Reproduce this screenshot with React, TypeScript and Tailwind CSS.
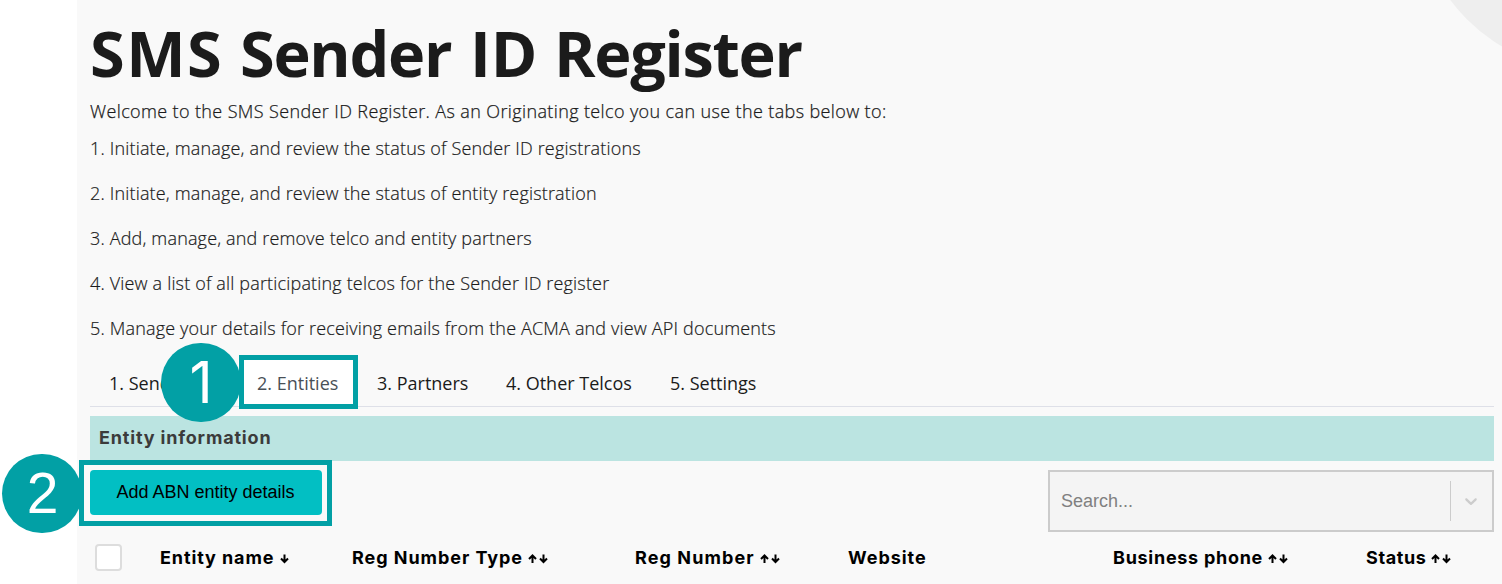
import React from "react";
import clsx from "clsx";

interface Column {
  label: string;
  sort?: "down" | "both";
  className: string;
}

const STEPS = [
  "1. Initiate, manage, and review the status of Sender ID registrations",
  "2. Initiate, manage, and review the status of entity registration",
  "3. Add, manage, and remove telco and entity partners",
  "4. View a list of all participating telcos for the Sender ID register",
  "5. Manage your details for receiving emails from the ACMA and view API documents",
];

const TABS = [
  { label: "1. Sender IDs", className: "w-[148px]" },
  { label: "2. Entities", className: "w-[120px]" },
  { label: "3. Partners", className: "w-[129px]" },
  { label: "4. Other Telcos", className: "w-[164px]" },
  { label: "5. Settings", className: "w-[125px]" },
];

const COLUMNS: Column[] = [
  { label: "Entity name", sort: "down", className: "tracking-[0.9px]" },
  { label: "Reg Number Type", sort: "both", className: "tracking-[0.95px]" },
  { label: "Reg Number", sort: "both", className: "tracking-[1.1px]" },
  { label: "Website", className: "tracking-[0.95px]" },
  { label: "Business phone", sort: "both", className: "tracking-[0.72px]" },
  { label: "Status", sort: "both", className: "tracking-[0.6px]" },
];

function SortIcon({ sort }: { sort: "down" | "both" }) {
  return (
    <svg
      className="ml-[5px] mt-[3px] h-[10px] shrink-0"
      width={sort === "both" ? 21 : 11}
      height="10"
      viewBox={sort === "both" ? "0 0 21 10" : "10 0 11 10"}
      fill="none"
      stroke="#000"
      strokeWidth="2"
    >
      {sort === "both" && <path d="M4.5 9V1.8M1 5L4.5 1.5L8 5" />}
      <path d="M15.5 0.5V7.7M12 4.5L15.5 8L19 4.5" />
    </svg>
  );
}

function StepBadge({ value, className }: { value: number; className: string }) {
  return (
    <div
      className={clsx(
        "absolute flex h-[79px] w-20 items-center justify-center rounded-full bg-[#02a0a5] text-[57px] leading-none text-white",
        className,
      )}
    >
      {value}
    </div>
  );
}

export default function App() {
  return (
    <div className="relative flex h-[584px] w-[1502px] overflow-hidden bg-white font-['Open_Sans',sans-serif] text-[#1b1b1b]">
      <aside className="w-[77px] shrink-0" />
      <main className="relative flex flex-1 flex-col overflow-hidden bg-[#f9f9f9] pl-[13px] pr-2">
        <div className="absolute left-[1338px] top-[-283px] size-[354px] rounded-full bg-[#eeeeee]" />

        <h1 className="mt-[9px] flex h-[89px] whitespace-nowrap text-[63px] font-bold leading-[88px]">
          <span className="w-[150px] tracking-[1.5px]">SMS</span>
          <span className="w-[230px] tracking-[-1.3px]">Sender</span>
          <span className="w-[84px]">ID</span>
          <span className="tracking-[-1.3px]">Register</span>
        </h1>
        <p className="h-[27px] whitespace-nowrap text-[18px] font-light leading-[27px] tracking-[0.375px] [-webkit-text-stroke:0.25px_#1b1b1b]">
          Welcome to the SMS Sender ID Register. As an Originating telco you can use the tabs below to:
        </p>
        <ul className="mt-[10px] flex flex-col gap-[18px]">
          {STEPS.map((step) => (
            <li
              key={step}
              className="h-[27px] whitespace-nowrap text-[18px] font-light leading-[27px] tracking-[0.167px] [-webkit-text-stroke:0.2px_#1b1b1b]"
            >
              {step}
            </li>
          ))}
        </ul>

        <nav className="mt-[18px] flex h-[47px] border-b border-[#dee0e8]">
          {TABS.map((tab) => (
            <button
              key={tab.label}
              type="button"
              className={clsx(
                "whitespace-nowrap pl-[19px] text-left text-[18px] leading-[46px]",
                tab.className,
                tab.label === "2. Entities" ? "bg-white text-[#495057]" : "text-[#1b1b1b]",
              )}
            >
              {tab.label}
            </button>
          ))}
        </nav>

        <h2 className="mt-[9px] h-[45px] bg-[#bbe4e1] pl-[9px] font-['Inter',sans-serif] text-[18px] font-bold leading-[43px] tracking-[0.82px] text-[#3b3b3b]">
          Entity information
        </h2>

        <div className="mt-[9px] flex h-[62px] items-start justify-between">
          <button
            type="button"
            className="h-[45px] w-[232px] rounded-[4px] bg-[#02bfc3] pr-px font-['Liberation_Sans',sans-serif] text-[18px] text-black"
          >
            Add ABN entity details
          </button>
          <div className="flex h-[62px] w-[446px] items-center border-2 border-[#cccccc] bg-[#f4f4f4] pl-[11px]">
            <span className="flex-1 font-['Liberation_Sans',sans-serif] text-[18px] text-[#808080]">Search...</span>
            <span className="h-10 w-px bg-[#cccccc]" />
            <span className="flex w-[41px] justify-center pr-px">
              <svg width="20" height="20" viewBox="0 0 20 20" fill="#cccccc">
                <path d="M4.516 7.548c0.436-0.446 1.043-0.481 1.576 0l3.908 3.747 3.908-3.747c0.533-0.481 1.141-0.446 1.574 0 0.436 0.445 0.408 1.197 0 1.615-0.406 0.418-4.695 4.502-4.695 4.502-0.217 0.223-0.502 0.335-0.787 0.335s-0.57-0.112-0.789-0.335c0 0-4.287-4.084-4.695-4.502s-0.436-1.17 0-1.615z" />
              </svg>
            </span>
          </div>
        </div>

        <div className="grid h-[50px] grid-cols-[70px_192px_283px_213px_265px_253px_128px] items-center font-['Inter',sans-serif] text-[18px] font-bold text-black">
          <span className="ml-[5px] size-[27px] rounded-[4px] border-2 border-[#dddddd] bg-white" />
          {COLUMNS.map((column) => (
            <span key={column.label} className="flex items-center whitespace-nowrap">
              <span className={column.className}>{column.label}</span>
              {column.sort && <SortIcon sort={column.sort} />}
            </span>
          ))}
        </div>
      </main>

      <StepBadge value={1} className="left-[161px] top-[343px] font-['Inter',sans-serif]" />
      <StepBadge value={2} className="left-[2px] top-[454px] pl-px font-['Liberation_Sans',sans-serif]" />
      <div className="absolute left-[239px] top-[355px] h-[54px] w-[119px] border-5 border-[#02a0a5]" />
      <div className="absolute left-[79px] top-[460px] h-[66px] w-[253px] border-5 border-[#02a0a5]" />
    </div>
  );
}
